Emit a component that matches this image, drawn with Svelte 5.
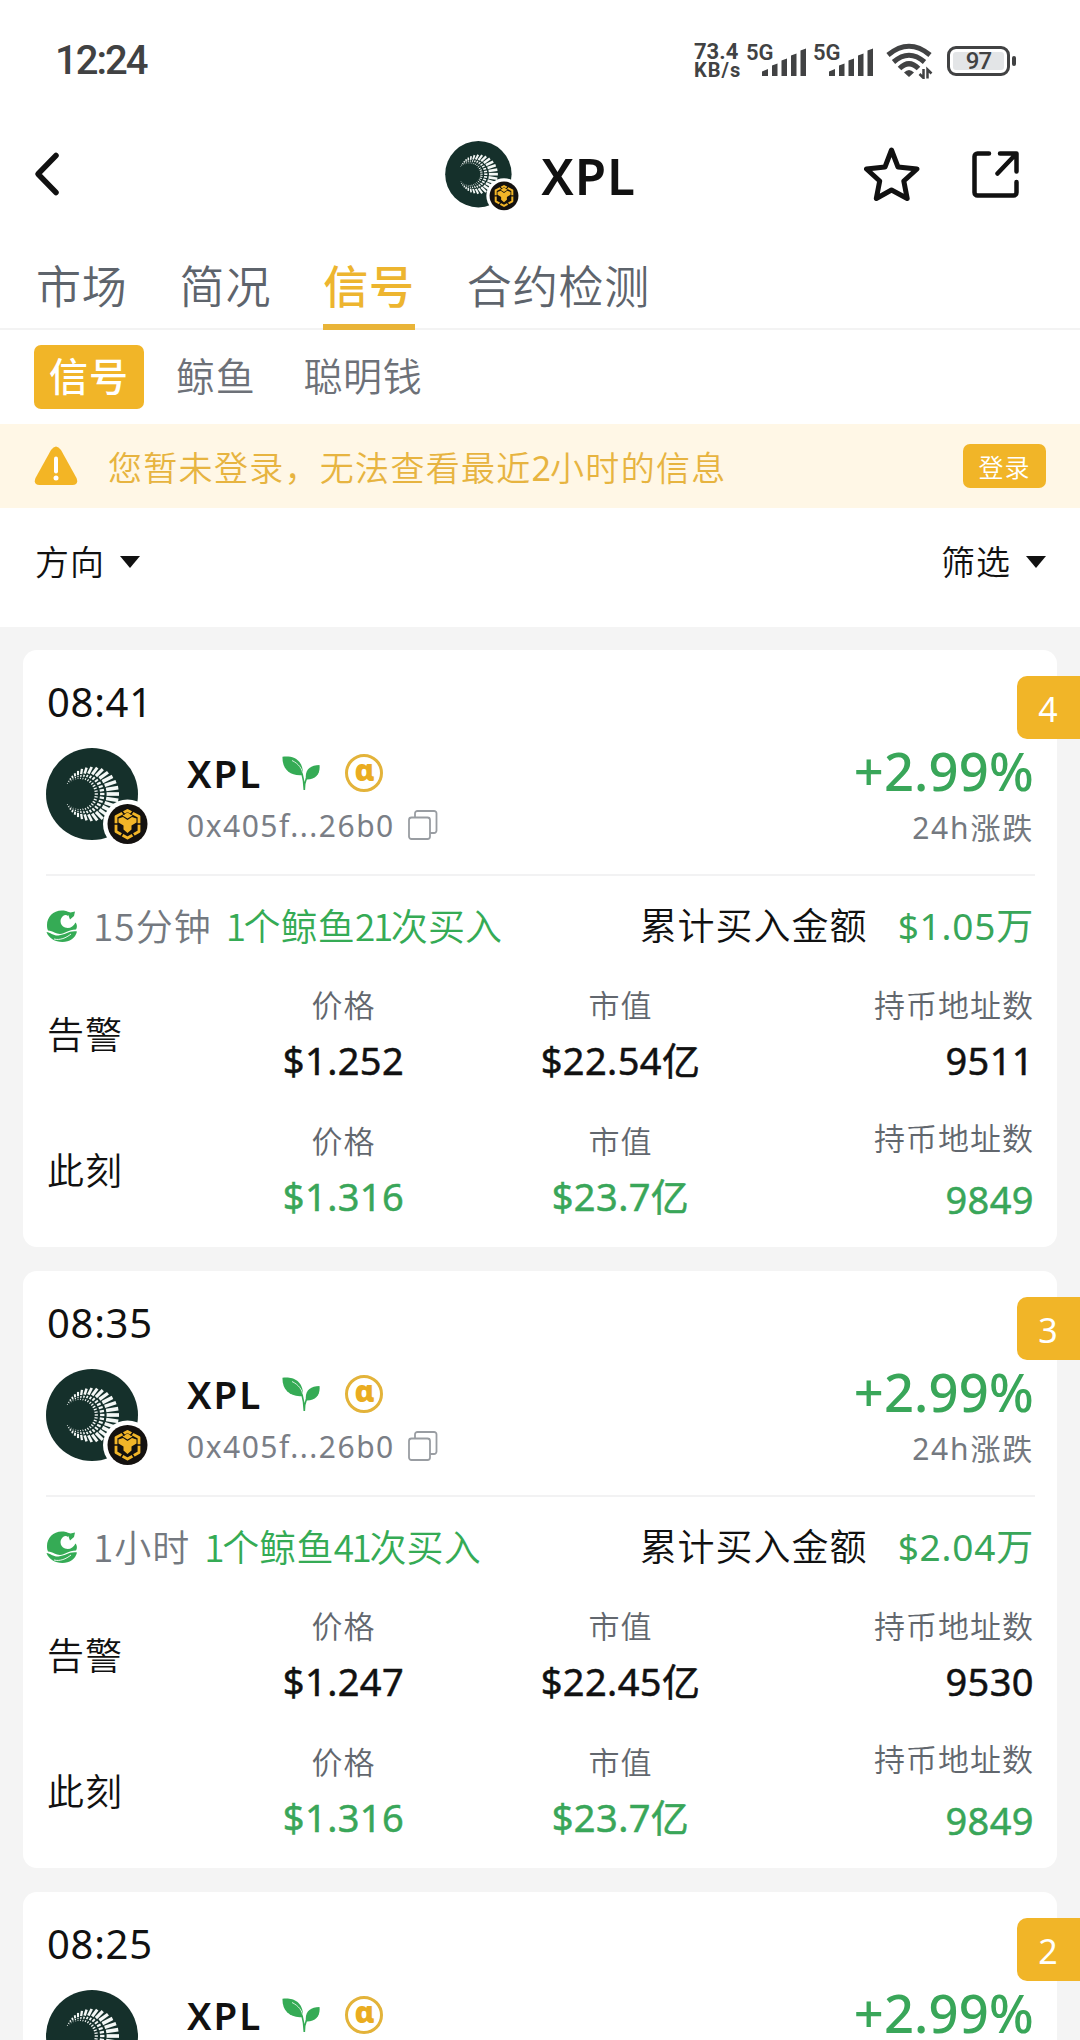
<script>
  const tabs = ["市场", "简况", "信号", "合约检测"];
  const subTabs = ["信号", "鲸鱼", "聪明钱"];
  let activeTab = 2;
  let activeSubTab = 0;

  const now = { price: "$1.316", cap: "$23.7亿", holders: "9849" };
  const signals = [
    {
      time: "08:41",
      badge: 4,
      span: "15分钟",
      count: 21,
      total: "$1.05万",
      rows: [
        { label: "告警", price: "$1.252", cap: "$22.54亿", holders: "9511" },
        { label: "此刻", live: true, ...now },
      ],
    },
    {
      time: "08:35",
      badge: 3,
      span: "1小时",
      count: 41,
      total: "$2.04万",
      rows: [
        { label: "告警", price: "$1.247", cap: "$22.45亿", holders: "9530" },
        { label: "此刻", live: true, ...now },
      ],
    },
    { time: "08:25", badge: 2, rows: [] },
  ];

  // rays start around (32, 46) and end on a circle of radius 27 around (46, 46)
  function buildRays() {
    const rays = [];
    const cx = 32;
    const inner = 14;
    for (let deg = -153; deg <= 153; deg += 9) {
      const a = (deg * Math.PI) / 180;
      const off = 46 - cx;
      const outer =
        off * Math.cos(a) +
        Math.sqrt(27 * 27 - off * off * Math.sin(a) * Math.sin(a));
      const len = outer - inner;
      if (len < 0.5) continue;
      const bands = [
        [0.54, 1, 0.09],
        [0.3, 0.46, 0.055],
        [0.1, 0.22, 0.035],
      ];
      for (const [from, to, w] of bands) {
        const r1 = inner + len * from;
        const r2 = inner + len * to;
        rays.push({
          x1: cx + r1 * Math.cos(a),
          y1: 46 + r1 * Math.sin(a),
          x2: cx + r2 * Math.cos(a),
          y2: 46 + r2 * Math.sin(a),
          w: outer * w,
        });
      }
    }
    return rays;
  }
  const rays = buildRays();
</script>

{#snippet tokenLogo()}
  <svg class="logo" viewBox="0 0 102 97">
    <circle cx="46" cy="46" r="46" fill="#15302b" />
    {#each rays as r}
      <line
        x1={r.x1}
        y1={r.y1}
        x2={r.x2}
        y2={r.y2}
        stroke="#f4f8f6"
        stroke-width={r.w}
      />
    {/each}
    <circle cx="81.5" cy="76" r="24.5" fill="#fff" />
    <circle cx="81.5" cy="76" r="20" fill="#14110f" />
    <g transform="translate(61.5 56)">
      <path
        d="M20 6.500 31.500 12.500v15L20 34 8.500 27.500v-15z"
        fill="none"
        stroke="#f2b528"
        stroke-width="2.800"
        stroke-linejoin="round"
      />
      <path d="M20 8.500l5 3-5 3-5-3z" fill="#f2b528" />
      <path
        d="M11 14.500l4.500-1.500 4.500 3 4.500-3 4.500 1.500v4l-5 3v4L20 29l-4-3.500v-4l-5-3z"
        fill="#f2b528"
      />
      <path
        d="M13 5.500l4 5M27 5.500l-4 5M6.500 20h4M29.500 20h4M13 33l2.500-4M27 33l-2.500-4"
        stroke="#14110f"
        stroke-width="1.600"
      />
    </g>
  </svg>
{/snippet}

{#snippet signalBars()}
  <svg class="bars" width="44" height="28" viewBox="0 0 44 28">
    <path
      d="M0 28v-4.500l6-2.500v7zM10 28V17.500l5.500-2V28zM19.500 28V12.500l5.500-2V28zM29 28V7.500l5.500-2V28zM38.500 28V2.500l5.500-2V28z"
      fill="#414243"
    />
  </svg>
{/snippet}

<div class="page">
  <div class="status">
    <span class="clock">12:24</span>
    <div class="status-right">
      <div class="speed">
        <span>73.4</span>
        <span class="unit">KB/s</span>
      </div>
      <div class="cell"><span>5G</span>{@render signalBars()}</div>
      <div class="cell"><span>5G</span>{@render signalBars()}</div>
      <svg class="wifi" width="48" height="36" viewBox="0 0 48 36">
        <g fill="none" stroke="#414243" stroke-width="5">
          <path d="M2 12Q23 -5.500 44 12" />
          <path d="M7.500 19Q23 5.500 38.500 19" />
          <path d="M13.500 25.500Q23 16 32.500 25.500" />
        </g>
        <path d="M18 29.500q5-5 10 0l-5 4.500z" fill="#414243" />
        <path
          d="M37.500 26v9l-4-4M41.500 35.500v-9l4 4"
          fill="none"
          stroke="#414243"
          stroke-width="2.500"
        />
      </svg>
      <div class="battery"><span>97</span></div>
      <i class="battery-tip"></i>
    </div>
  </div>

  <header>
    <svg class="back" width="28" height="46" viewBox="0 0 28 46">
      <path
        d="M23 4.500 5 23l18 18.500"
        fill="none"
        stroke="#111"
        stroke-width="5.500"
        stroke-linecap="round"
        stroke-linejoin="round"
      />
    </svg>
    <div class="title">
      {@render tokenLogo()}
      <h1>XPL</h1>
    </div>
    <div class="actions">
      <svg width="56" height="56" viewBox="0 0 56 56">
        <path
          d="M27.500 4l6.500 17 19 2-13.200 12 3.400 17.500L27.500 44 12.300 52.500l3.400-17.500L2.500 23l18.500-2z"
          fill="none"
          stroke="#111"
          stroke-width="5"
          stroke-linejoin="round"
        />
      </svg>
      <svg width="48" height="48" viewBox="0 0 48 48">
        <path
          d="M18 3.500H6.500a3 3 0 0 0-3 3v36a3 3 0 0 0 3 3h36a3 3 0 0 0 3-3V32M29 3.500h16.500v18M45 4 26.500 23.500"
          fill="none"
          stroke="#111"
          stroke-width="4.500"
          stroke-linecap="round"
          stroke-linejoin="round"
        />
      </svg>
    </div>
  </header>

  <nav class="tabs">
    {#each tabs as tab, i}
      <button class:active={i === activeTab} on:click={() => (activeTab = i)}>
        {tab}
      </button>
    {/each}
  </nav>

  <nav class="sub-tabs">
    {#each subTabs as tab, i}
      <button
        class:active={i === activeSubTab}
        on:click={() => (activeSubTab = i)}
      >
        {tab}
      </button>
    {/each}
  </nav>

  <div class="notice">
    <svg width="44" height="40" viewBox="0 0 44 40">
      <path
        d="M17 4q5-7 10 0l15.500 28q2.500 6.500-4 7H5.500q-6.500-.500-4-7z"
        fill="#f3b525"
      />
      <path
        d="M22 12.500v13"
        stroke="#fff"
        stroke-width="4"
        stroke-linecap="round"
      />
      <circle cx="22" cy="32" r="2.500" fill="#fff" />
    </svg>
    <p>您暂未登录，无法查看最近<span>2</span>小时的信息</p>
    <button>登录</button>
  </div>

  <div class="filters">
    <button>方向 <i></i></button>
    <button>筛选 <i></i></button>
  </div>

  <main>
    {#each signals as s}
      <section class="card">
        <span class="badge">{s.badge}</span>
        <div class="time">{s.time}</div>

        <div class="token">
          {@render tokenLogo()}
          <div class="names">
            <div class="name">
              <b>XPL</b>
              <svg class="sprout" width="38" height="35" viewBox="0 0 38 35">
                <path
                  d="M.5.800C9-.500 21.500 2 21 19 8 20.500 0 13 .500.800z"
                  fill="#35ab55"
                />
                <path
                  d="M37.500 9c1 8.500-3.500 15-13.500 14.500C22.500 14 28 9 37.500 9z"
                  fill="#35ab55"
                />
                <path
                  d="M10 4.500c7 3.500 10 8 11 14"
                  fill="none"
                  stroke="#fff"
                  stroke-width="0.800"
                />
                <path
                  d="M20 17.500q2 7 2.300 16.500 0-7 2.200-12"
                  fill="none"
                  stroke="#35ab55"
                  stroke-width="1.600"
                />
              </svg>
              <span class="alpha">ɑ</span>
            </div>
            <div class="address">
              <span>0x405f...26b0</span>
              <svg width="30" height="30" viewBox="0 0 30 30">
                <g fill="none" stroke="#999da2" stroke-width="1.800">
                  <rect x="1" y="7.500" width="21" height="21.500" rx="2.500" />
                  <path
                    d="M7 7.500V3.500A2.500 2.500 0 0 1 9.500 1H26a2.500 2.500 0 0 1 2.500 2.500V20.500A2.500 2.500 0 0 1 26 23h-4"
                  />
                </g>
              </svg>
            </div>
          </div>
          <div class="change">
            <strong>+2.99%</strong>
            <span>24h涨跌</span>
          </div>
        </div>

        {#if s.total}
          <div class="summary">
            <svg width="32" height="32" viewBox="0 0 32 32">
              <path
                d="M20 1C9-1.500 1 6 1 15c0 2.500.300 4 1 5.500 5 .5 8 3.500 12 3.500 5 0 8-4.500 16-4.500 1.500-2.500 1-5.500-.5-7-2 4.500-6.500 6.500-10.500 5-5-2-6-8-2-11.500 2-1.500 4-1 5 0l.5-2.500z"
                fill="#35ab55"
              />
              <path
                d="M.5 22c4 .5 7 4 12 3.500C19 25 23 20.500 31 21.500 29.500 28 23.500 32 16.500 32 9 32 2.500 28 .500 22z"
                fill="#35ab55"
              />
              <path
                d="M19.500 1l5 1.500 4.500-1-1 4.500-4 3.500-1.500-4z"
                fill="#35ab55"
              />
              <path
                d="M8 29c6 1.500 12-1 17-5"
                fill="none"
                stroke="#fff"
                stroke-width="0.900"
              />
            </svg>
            <span class="span">{s.span}</span>
            <span class="event"
              ><em>1</em>个鲸鱼<em>{s.count}</em>次买入</span
            >
            <span class="total-label">累计买入金额</span>
            <span class="total">{s.total}</span>
          </div>
        {/if}

        {#each s.rows as row}
          <div class="row" class:live={row.live}>
            <div class="label">{row.label}</div>
            <div class="cell-data">
              <span>价格</span>
              <b>{row.price}</b>
            </div>
            <div class="cell-data">
              <span>市值</span>
              <b>{row.cap}</b>
            </div>
            <div class="cell-data holders">
              <span>持币地址数</span>
              <b>{row.holders}</b>
            </div>
          </div>
        {/each}
      </section>
    {/each}
  </main>
</div>

<style>
  :global(body) {
    background: #f4f4f4;
  }
  .page {
    height: 2040px;
    overflow: hidden;
    background: #f4f4f4;
    color: #111;
    font-family: "Noto Sans", "Noto Sans CJK SC", sans-serif;
    letter-spacing: 1px;
  }
  button {
    padding: 0;
    border: none;
    background: transparent;
    color: inherit;
    font: inherit;
    letter-spacing: inherit;
    cursor: pointer;
  }
  svg {
    display: block;
    flex: none;
  }
  .status {
    display: flex;
    justify-content: space-between;
    align-items: center;
    height: 121px;
    padding: 0 64px 0 55px;
    background: #fff;
    color: #414243;
    font-family: Roboto, sans-serif;
    box-sizing: border-box;
  }
  .clock {
    font-size: 40px;
    font-weight: 500;
    letter-spacing: -2px;
  }
  .status-right {
    display: flex;
    align-items: center;
    letter-spacing: 0;
  }
  .speed {
    display: flex;
    flex-direction: column;
    width: 52px;
    font-size: 22px;
    font-weight: 700;
    line-height: 18px;
  }
  .speed .unit {
    font-size: 20px;
    letter-spacing: 1px;
  }
  .cell {
    display: flex;
    width: 67px;
    height: 32px;
    font-size: 22px;
    font-weight: 600;
    line-height: 15px;
  }
  .bars {
    margin: 3px 0 0 -12px;
  }
  .wifi {
    margin: 1px 0 0 6px;
  }
  .battery {
    display: flex;
    align-items: center;
    justify-content: center;
    width: 63px;
    height: 30px;
    margin-left: 13px;
    border: 3px solid #414243;
    border-radius: 9px;
    background: #e3e5e7;
    box-shadow: inset 0 0 0 3px #fff;
    font-size: 24px;
    font-weight: 500;
    letter-spacing: -1px;
    box-sizing: border-box;
  }
  .battery-tip {
    width: 4px;
    height: 10px;
    margin-left: 2px;
    border-radius: 2px;
    background: #414243;
  }
  header {
    display: grid;
    grid-template-columns: 1fr auto 1fr;
    align-items: center;
    height: 106px;
    padding: 0 61px 0 33px;
    background: #fff;
  }
  .title {
    display: flex;
    align-items: center;
    gap: 22px;
    padding-left: 29px;
  }
  .title .logo {
    width: 74px;
    height: 70px;
    margin-top: 4px;
  }
  h1 {
    margin: 1px 0 0;
    font-size: 51px;
    font-weight: 600;
    line-height: 60px;
  }
  .actions {
    display: flex;
    align-items: center;
    justify-content: flex-end;
    gap: 51px;
  }
  .tabs {
    display: flex;
    gap: 52px;
    height: 103px;
    padding-left: 36px;
    border-bottom: 2px solid #f3f3f3;
    background: #fff;
    color: #5e646c;
    font-size: 45px;
    font-weight: 350;
    letter-spacing: 0.800px;
    box-sizing: border-box;
  }
  .tabs button {
    display: flex;
    margin-bottom: -2px;
    padding-top: 18px;
    border-bottom: 6px solid transparent;
    line-height: 84px;
  }
  .tabs .active {
    border-color: #e9b438;
    color: #edb52f;
    font-weight: 500;
  }
  .sub-tabs {
    display: flex;
    align-items: flex-start;
    gap: 48px;
    height: 94px;
    padding: 15px 34px 0;
    background: #fff;
    color: #6d7178;
    font-size: 39px;
    font-weight: 350;
    line-height: 62px;
    letter-spacing: 0.700px;
    box-sizing: border-box;
  }
  .sub-tabs .active {
    margin-right: -16px;
    padding: 0 15px 2px;
    border-radius: 7px;
    background: #f1b528;
    color: #fff;
    font-weight: 500;
    letter-spacing: 1px;
  }
  .notice {
    display: flex;
    align-items: center;
    height: 84px;
    padding: 0 34px;
    background: #fff7e6;
    color: #e7b440;
    font-weight: 350;
  }
  .notice p {
    flex: 1;
    margin: 0 0 0 30px;
    font-size: 34px;
    letter-spacing: 1.300px;
  }
  .notice p span {
    font-weight: 400;
    letter-spacing: -1px;
  }
  .notice button {
    width: 83px;
    height: 44px;
    border-radius: 7px;
    background: #f1b528;
    color: #fff;
    font-size: 25px;
    font-weight: 350;
  }
  .filters {
    display: flex;
    justify-content: space-between;
    height: 119px;
    padding: 0 34px 15px 35px;
    background: #fff;
    font-size: 34px;
    font-weight: 350;
    box-sizing: border-box;
  }
  .filters button {
    display: flex;
    align-items: center;
    gap: 15px;
  }
  .filters i {
    margin-top: 3px;
    border: 10px solid transparent;
    border-top: 12px solid #111;
    border-bottom: 0;
  }
  main {
    display: flex;
    flex-direction: column;
    gap: 24px;
    padding: 23px 23px 0;
  }
  .card {
    position: relative;
    flex: none;
    height: 597px;
    padding: 27px 22px 0 23px;
    border-radius: 14px;
    background: #fff;
    box-sizing: border-box;
  }
  .badge {
    position: absolute;
    top: 26px;
    right: -23px;
    width: 63px;
    height: 63px;
    border-radius: 10px 0 0 10px;
    background: #f1b528;
    color: #fff;
    font-size: 34px;
    line-height: 66px;
    text-align: center;
  }
  .time {
    padding-left: 1px;
    font-size: 40px;
    line-height: 50px;
    letter-spacing: 0.700px;
  }
  .token {
    display: flex;
    height: 149px;
    padding-top: 21px;
    border-bottom: 2px solid #f2f2f3;
    box-sizing: border-box;
  }
  .token .logo {
    width: 102px;
    height: 97px;
  }
  .names {
    margin-left: 39px;
  }
  .name {
    display: flex;
    align-items: center;
    height: 50px;
  }
  .name b {
    font-size: 38.500px;
    font-weight: 600;
    letter-spacing: 2px;
  }
  .sprout {
    margin-left: 20px;
  }
  .alpha {
    width: 38px;
    height: 38px;
    margin-left: 25px;
    border: 3px solid #e3b33a;
    border-radius: 50%;
    color: #eaac20;
    font-size: 30px;
    font-weight: 900;
    line-height: 25px;
    letter-spacing: 0;
    text-align: center;
    box-sizing: border-box;
  }
  .address {
    display: flex;
    align-items: center;
    gap: 13px;
    height: 54px;
    color: #7a7e86;
    font-size: 30px;
    letter-spacing: 1.500px;
  }
  .change {
    display: flex;
    flex-direction: column;
    align-items: flex-end;
    margin-left: auto;
    padding-right: 1px;
  }
  .change strong {
    color: #39a659;
    font-size: 52.500px;
    font-weight: 500;
    line-height: 46px;
    letter-spacing: 0.200px;
  }
  .change span {
    padding-top: 3px;
    color: #747980;
    font-size: 30px;
    line-height: 62px;
    letter-spacing: 1.800px;
  }
  .summary {
    display: flex;
    align-items: center;
    height: 99px;
    margin-bottom: 2px;
    font-size: 37px;
    font-weight: 350;
    line-height: 50px;
  }
  .span {
    padding-bottom: 2px;
    margin-left: 15px;
    color: #747980;
    font-family: "Noto Sans CJK SC", sans-serif;
    letter-spacing: 1px;
  }
  .event {
    padding-bottom: 2px;
    margin-left: 14px;
    color: #35ab55;
    font-family: "Noto Sans CJK SC", sans-serif;
    letter-spacing: 0.200px;
  }
  .event em {
    font-style: normal;
    letter-spacing: -2.500px;
  }
  .total-label {
    margin-left: auto;
  }
  .total {
    margin: 0 1px 0 30px;
    color: #39a659;
    font-weight: 400;
    letter-spacing: 0.800px;
  }
  .row {
    display: grid;
    grid-template-columns: 159px 277px 277px 1fr;
    height: 136px;
  }
  .label {
    padding-left: 1px;
    font-size: 37px;
    font-weight: 350;
    line-height: 116px;
  }
  .cell-data {
    display: flex;
    flex-direction: column;
    align-items: center;
  }
  .cell-data span {
    color: #62676e;
    font-size: 31px;
    font-weight: 350;
    line-height: 56px;
  }
  .cell-data b {
    font-size: 38px;
    font-weight: 400;
    line-height: 54px;
    letter-spacing: 0.400px;
    -webkit-text-stroke: 0.500px currentColor;
  }
  .holders {
    align-items: flex-end;
    padding-right: 1px;
  }
  .live b {
    color: #39a659;
  }
  .live .holders {
    gap: 6px;
    margin-top: -3px;
  }
</style>
